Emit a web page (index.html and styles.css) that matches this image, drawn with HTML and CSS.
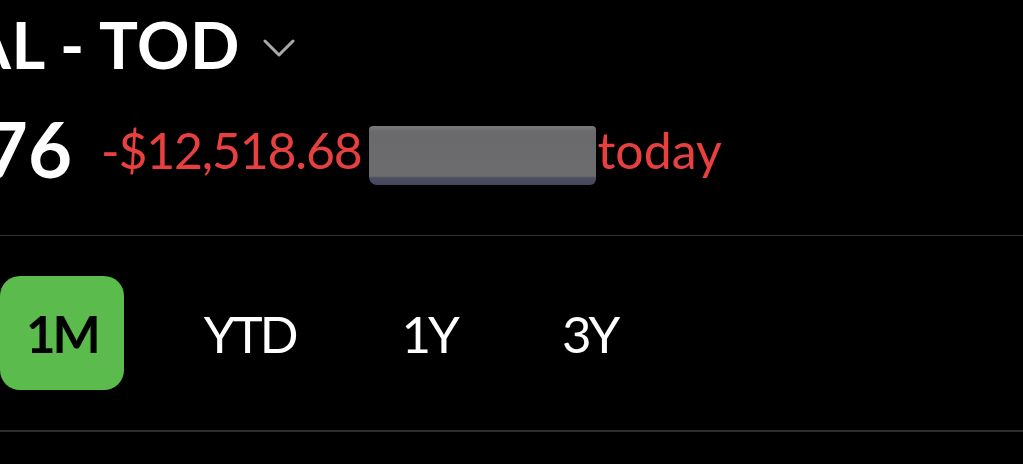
FILE: index.html
```html
<!DOCTYPE html>
<html lang="en">
<head>
    <meta charset="UTF-8">
    <title>Account</title>
    <link rel="stylesheet" href="styles.css">
</head>
<body>
<div class="account">
    <div class="account-row">
        <div class="clip clip-title">
            <span class="account-name">INDIVIDUAL - TOD</span>
        </div>
        <svg class="chevron" width="32" height="20" viewBox="0 0 32 20">
            <polyline points="2,3 16,17 30,3" fill="none" stroke="#a9a9a9" stroke-width="3" stroke-linecap="round" stroke-linejoin="round"/>
        </svg>
    </div>
    <div class="balance-row">
        <div class="clip clip-balance">
            <span class="balance">$248,930.76</span>
        </div>
        <span class="change change-amount">-$12,518.68</span>
        <span class="redacted"></span>
        <span class="change change-label">today</span>
    </div>
</div>

<div class="divider"></div>

<!-- range picker -->
<div class="ranges">
    <span class="range active">1M</span>
    <span class="range">YTD</span>
    <span class="range">1Y</span>
    <span class="range">3Y</span>
</div>

<div class="divider divider-bottom"></div>
</body>
</html>
```

FILE: styles.css
```css
* {
    margin: 0;
    padding: 0;
}
html, body {
    background: #000000;
}
body {
    width: 1023px;
    height: 464px;
    overflow: hidden;
    font-family: "Lato", "Open Sans", sans-serif;
    color: #ffffff;
}

/* text on the left is cut by the crop: right edge is kept, overflow goes left */
.clip {
    display: flex;
    justify-content: flex-end;
    white-space: nowrap;
    flex-shrink: 0;
}

.account {
    padding-top: 12px;
}
.account-row {
    display: flex;
    align-items: flex-start;
}
.clip-title {
    width: 240px;
}
.account-name {
    font-size: 65px;
    line-height: 65px;
    font-weight: 700;
    letter-spacing: 0.5px;
}
.chevron {
    margin-left: 23px;
    margin-top: 26px;
}

.balance-row {
    display: flex;
    align-items: flex-start;
    margin-top: 34px;
    white-space: nowrap;
}
.clip-balance {
    width: 72px;
}
.balance {
    font-size: 76px;
    line-height: 76px;
    font-weight: 700;
}
.change {
    color: #e8403e;
    font-size: 50px;
    line-height: 50px;
    margin-top: 14px;
}
.change-amount {
    margin-left: 29px;
    letter-spacing: -1.2px;
}
.redacted {
    width: 227px;
    height: 59px;
    margin: 15px 2px 0 7px;
    background: linear-gradient(#7a7a7b, #6a6a6c 10%, #6c6c6e 85%, #4b4d60 88%, #44465a);
    border-radius: 4px 4px 6px 8px;
}

.divider {
    height: 1px;
    background: #333333;
    margin-top: 48px;
}

.ranges {
    display: flex;
    gap: 54px;
    margin-top: 40px;
}
.range {
    padding: 0 26px;
    height: 114px;
    border-radius: 20px;
    display: flex;
    align-items: center;
    font-size: 51px;
    letter-spacing: -3px;
    color: #ffffff;
}
.range.active {
    background: #5cbb4d;
    color: #000000;
    font-weight: 700;
}
.range:last-child {
    margin-left: -1px;
}

.divider-bottom {
    height: 2px;
    background: #2c2c2c;
    margin-top: 40px;
}
```
